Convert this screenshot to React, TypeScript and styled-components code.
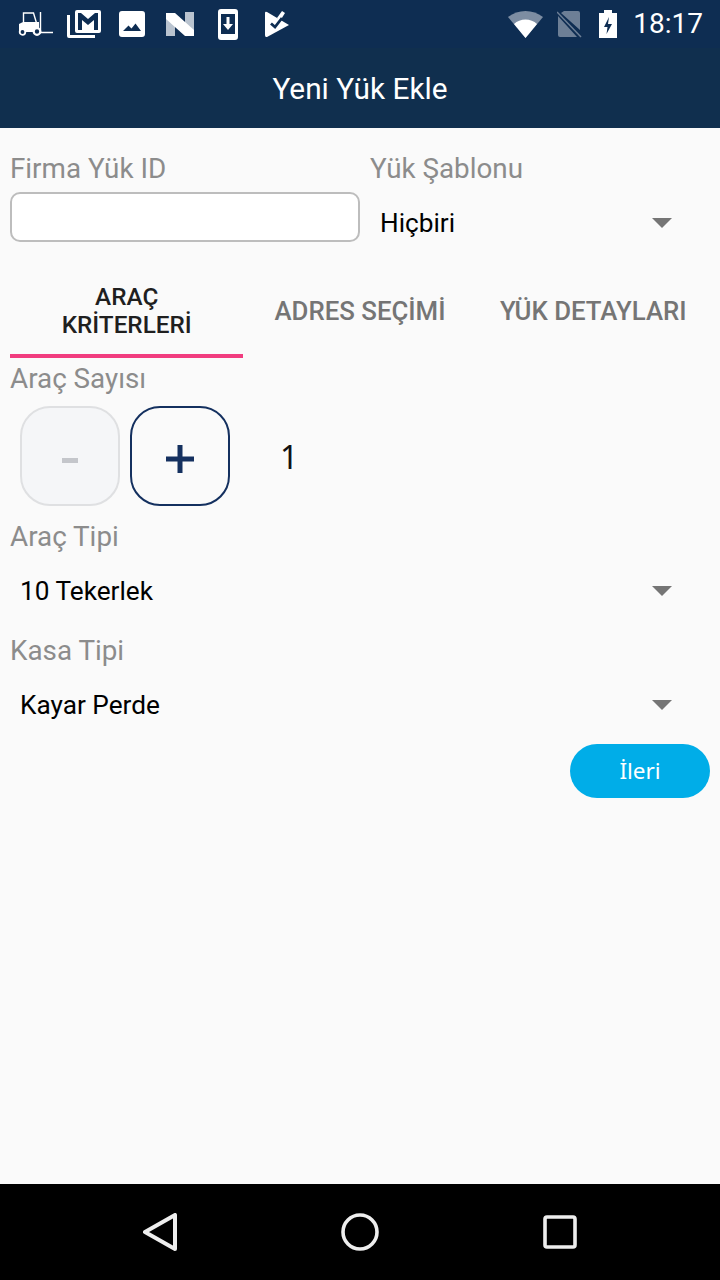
import React from "react";
import styled, { createGlobalStyle } from "styled-components";

const Global = createGlobalStyle`
  html, body { margin: 0; padding: 0; background: #fafafa; }
  * { box-sizing: border-box; }
  #root { width: 720px; height: 1280px; }
`;
const Screen = styled.div`
  width: 720px; height: 1280px; display: flex; flex-direction: column; overflow: hidden;
  font-family: Roboto, "Liberation Sans", sans-serif; background: #fafafa;
`;
const StatusBar = styled.div`
  height: 48px; background: #0e2d52; display: flex; align-items: center; color: #fff;
  padding: 0 17px 0 18px;
`;
const StatusIcons = styled.div`display: flex; align-items: center;`;
const StatusRight = styled.div`margin-left: auto; display: flex; align-items: center;`;
const Clock = styled.span`
  font-size: 28px; margin-left: 16px; line-height: 48px;
`;
const AppBar = styled.div`
  height: 80px; background: #102f4e; color: #fff; display: flex; align-items: center; justify-content: center;
  font-size: 29.800px; padding-top: 1px;
`;
const Content = styled.div`flex: 1; padding: 0 10px; display: flex; flex-direction: column;`;
const TopRow = styled.div`display: flex; gap: 10px; padding-top: 25px; margin-right: -10px;`;
const Col = styled.div`flex: 1; min-width: 0;`;
const Label = styled.div`
  font-size: 27.800px; line-height: 32px; color: #8c8c8c; height: 32px;
`;
const TextBox = styled.div`
  margin-top: 7px; height: 50px; background: #fff; border: 2px solid #bdbdbd; border-radius: 10px;
`;
const Picker = styled.div<{ $top: number; $right: number }>`
  margin-top: ${p => p.$top}px; height: 50px; display: flex; align-items: center; justify-content: space-between;
  padding: 0 ${p => p.$right}px 0 10px; font-size: 26.200px; color: #000;
`;
const Arrow = styled.div`
  width: 0; height: 0; border-left: 10px solid transparent; border-right: 10px solid transparent;
  border-top: 10px solid #757575;
`;
const Tabs = styled.div`display: flex; margin-top: 22px; height: 88px;`;
const Tab = styled.div<{ $active?: boolean }>`
  flex: 1; display: flex; align-items: center; justify-content: center; text-align: center;
  font-size: ${p => (p.$active ? 24.3 : 25.8)}px; line-height: 28px; font-weight: 500; padding: 0 0 2px;
  white-space: pre-line;
  color: ${p => (p.$active ? "#1f1f1f" : "#757575")};
  border-bottom: 4px solid ${p => (p.$active ? "#f13c7f" : "transparent")};
`;
const CountLabel = styled(Label)`margin-top: 5px;`;
const Stepper = styled.div`display: flex; align-items: center; gap: 10px; padding-left: 10px; margin-top: 11px;`;
const StepButton = styled.div<{ $disabled?: boolean }>`
  width: 100px; height: 100px; border-radius: 30px; display: flex; align-items: center; justify-content: center;
  padding-top: ${p => (p.$disabled ? 8 : 6)}px;
  border: 2px solid ${p => (p.$disabled ? "#dfe0e2" : "#14305f")};
  background: ${p => (p.$disabled ? "#f5f6f8" : "#fafafa")};
`;
const Count = styled.div`
  font-family: "Noto Sans", sans-serif; font-size: 32px; color: #111; margin-left: 40px; margin-top: 0;
`;
const FieldLabel = styled(Label)<{ $top: number }>`margin-top: ${p => p.$top}px;`;
const Actions = styled.div`display: flex; justify-content: flex-end; margin-top: 14px;`;
const NextButton = styled.div`
  width: 140px; height: 54px; border-radius: 27px; background: #00ade8; color: #fff; padding-bottom: 2px;
  font-family: "Noto Sans", sans-serif; font-size: 22.500px; display: flex; align-items: center; justify-content: center;
`;
const NavBar = styled.div`
  height: 96px; background: #000; display: flex; align-items: center; justify-content: center;
`;
const NavSlot = styled.div`width: 200px; display: flex; justify-content: center;`;
const Gap = styled.span<{ $w: number }>`display: inline-block; width: ${p => p.$w}px;`;

const BG = "#0e2d52";

const Forklift = () => (
  <svg width="35" height="24" viewBox="0 0 35 24" fill="none">
    <path d="M5.500 10V1h10l3 10" stroke="#fff" strokeWidth="1.400" />
    <path d="M1 12l4-2h16v10H1z" fill="#fff" />
    <path d="M22.500 0v20.500H35" stroke="#fff" strokeWidth="1.400" />
    <circle cx="4.500" cy="20" r="2.800" fill={BG} stroke="#fff" strokeWidth="1.800" />
    <circle cx="19" cy="19.500" r="3.300" fill={BG} stroke="#fff" strokeWidth="2.200" />
  </svg>
);
const Mail = () => (
  <svg width="34" height="28" viewBox="0 0 34 28">
    <path d="M0 5h3v20h25v3H2a2 2 0 0 1-2-2z" fill="#fff" />
    <path fillRule="evenodd" d="M10 0h22a2 2 0 0 1 2 2v19a2 2 0 0 1-2 2H10a2 2 0 0 1-2-2V2a2 2 0 0 1 2-2zm1 3v17h4V10l6 5 6-5v10h4V3h-3l-7 6-7-6z" fill="#fff" />
  </svg>
);
const Picture = () => (
  <svg width="26" height="26" viewBox="0 0 26 26">
    <path fillRule="evenodd" d="M3 0h20a3 3 0 0 1 3 3v20a3 3 0 0 1-3 3H3a3 3 0 0 1-3-3V3a3 3 0 0 1 3-3zm1 20h18l-5.500-7.500-4 5-3-3z" fill="#fff" />
  </svg>
);
const NLogo = () => (
  <svg width="28" height="24" viewBox="0 0 28 24">
    <path d="M0 5l9 4v15H0z" fill="#b9c3cf" />
    <path d="M19 0h9v19l-9-6z" fill="#b9c3cf" />
    <path d="M0 1h9l19 17v6h-9L0 7z" fill="#fff" />
  </svg>
);
const PhoneDown = () => (
  <svg width="20" height="31" viewBox="0 0 20 31">
    <path fillRule="evenodd" d="M3 0h14a3 3 0 0 1 3 3v25a3 3 0 0 1-3 3H3a3 3 0 0 1-3-3V3a3 3 0 0 1 3-3zm0 5v20h14V5z" fill="#fff" />
    <path d="M8.500 8h3v7h3.500l-5 6-5-6h3.500z" fill="#fff" />
  </svg>
);
const CheckTag = () => (
  <svg width="24" height="26" viewBox="0 0 24 26">
    <path d="M0 2Q0 0 2 1L24 14 2 26Q0 26.500 0 24z" fill="#fff" />
    <path d="M12 7L17 0l3 2-5 8z" fill="#fff" />
    <path d="M6 12.500l4 3.500 7-9" stroke={BG} strokeWidth="2.800" fill="none" />
  </svg>
);
const Wifi = () => (
  <svg width="35" height="27" viewBox="0 0 35 27">
    <path d="M17.500 27L0 6C10-2 25-2 35 6z" fill="#7d8da2" />
    <path d="M17.500 27L6 13C12 7 23 7 29 13z" fill="#fff" />
  </svg>
);
const NoSim = () => (
  <svg width="25" height="27" viewBox="0 0 25 27">
    <path d="M7 0h14a2 2 0 0 1 2 2v17L4 2zM1 5l19 21H3a2 2 0 0 1-2-2z" fill="#6d7f96" />
    <path d="M0 1l24 25" stroke="#6d7f96" strokeWidth="1.500" />
  </svg>
);
const Battery = () => (
  <svg width="18" height="28" viewBox="0 0 18 28">
    <path fillRule="evenodd" d="M5 0h8v3h5v25H0V3h5zM10 7l-5 10h3.500l-1 7 5.500-10H9z" fill="#fff" />
  </svg>
);
const Minus = () => (
  <svg width="16" height="5" viewBox="0 0 16 5"><rect width="16" height="5" fill="#c4c6cb" /></svg>
);
const Plus = () => (
  <svg width="28" height="28" viewBox="0 0 28 28"><path d="M11.500 0h5v11.500H28v5H16.500V28h-5V16.500H0v-5h11.500z" fill="#14305f" /></svg>
);
const Back = () => (
  <svg width="34" height="38" viewBox="0 0 34 38" fill="none">
    <path d="M32 2v34L2 19z" stroke="#eee" strokeWidth="4" strokeLinejoin="round" />
  </svg>
);
const Home = () => (
  <svg width="38" height="38" viewBox="0 0 38 38" fill="none"><circle cx="19" cy="19" r="17" stroke="#eee" strokeWidth="3.600" /></svg>
);
const Recent = () => (
  <svg width="34" height="34" viewBox="0 0 34 34" fill="none"><rect x="2" y="2" width="30" height="30" rx="2" stroke="#eee" strokeWidth="3.600" /></svg>
);

export default function App() {
  return (
    <Screen>
      <Global />
      <StatusBar>
        <StatusIcons>
          <Forklift /><Gap $w={14} /><Mail /><Gap $w={18} /><Picture /><Gap $w={21} /><NLogo /><Gap $w={24} /><PhoneDown /><Gap $w={27} /><CheckTag />
        </StatusIcons>
        <StatusRight>
          <Wifi /><Gap $w={14} /><NoSim /><Gap $w={17} /><Battery /><Clock>18:17</Clock>
        </StatusRight>
      </StatusBar>
      <AppBar>Yeni Yük Ekle</AppBar>
      <Content>
        <TopRow>
          <Col>
            <Label>Firma Yük ID</Label>
            <TextBox />
          </Col>
          <Col>
            <Label>Yük Şablonu</Label>
            <Picker $top={13} $right={48}>Hiçbiri<Arrow /></Picker>
          </Col>
        </TopRow>
        <Tabs>
          <Tab $active>{"ARAÇ\nKRİTERLERİ"}</Tab>
          <Tab>ADRES SEÇİMİ</Tab>
          <Tab>YÜK DETAYLARI</Tab>
        </Tabs>
        <CountLabel>Araç Sayısı</CountLabel>
        <Stepper>
          <StepButton $disabled><Minus /></StepButton>
          <StepButton><Plus /></StepButton>
          <Count>1</Count>
        </Stepper>
        <FieldLabel $top={15}>Araç Tipi</FieldLabel>
        <Picker $top={13} $right={38}>10 Tekerlek<Arrow /></Picker>
        <FieldLabel $top={19}>Kasa Tipi</FieldLabel>
        <Picker $top={13} $right={38}>Kayar Perde<Arrow /></Picker>
        <Actions><NextButton>İleri</NextButton></Actions>
      </Content>
      <NavBar>
        <NavSlot><Back /></NavSlot>
        <NavSlot><Home /></NavSlot>
        <NavSlot><Recent /></NavSlot>
      </NavBar>
    </Screen>
  );
}
